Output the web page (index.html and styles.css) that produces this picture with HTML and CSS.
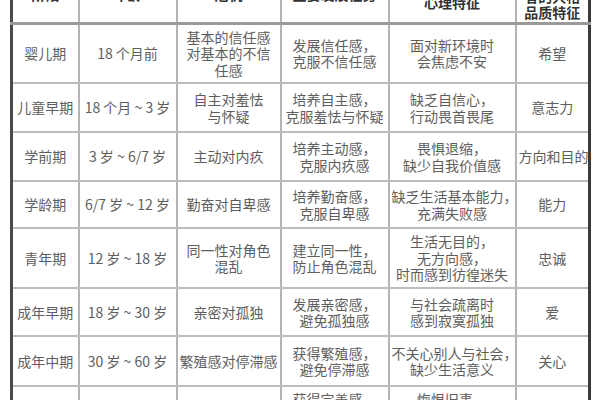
FILE: index.html
```html
<!DOCTYPE html>
<html lang="zh-CN">
<head>
<meta charset="utf-8">
<title>埃里克森人格发展阶段</title>
<link rel="stylesheet" href="styles.css">
</head>
<body>
<div class="page">
<table class="stages">
  <colgroup>
    <col class="c1"><col class="c2"><col class="c3"><col class="c4"><col class="c5"><col class="c6">
  </colgroup>
  <thead>
    <tr class="head">
      <th>阶段</th>
      <th>年龄</th>
      <th>危机</th>
      <th>主要发展任务</th>
      <th>发展障碍者的<br>心理特征</th>
      <th class="tall">发展顺利<br>者的人格<br>品质特征</th>
    </tr>
  </thead>
  <tbody>
    <tr class="h60">
      <td>婴儿期</td>
      <td>18 个月前</td>
      <td>基本的信任感<br>对基本的不信<br>任感</td>
      <td>发展信任感，<br>克服不信任感</td>
      <td>面对新环境时<br>会焦虑不安</td>
      <td>希望</td>
    </tr>
    <tr class="h49">
      <td>儿童早期</td>
      <td>18 个月 ~ 3 岁</td>
      <td>自主对羞怯<br>与怀疑</td>
      <td>培养自主感，<br>克服羞怯与怀疑</td>
      <td>缺乏自信心，<br>行动畏首畏尾</td>
      <td>意志力</td>
    </tr>
    <tr class="h49">
      <td>学前期</td>
      <td>3 岁 ~ 6/7 岁</td>
      <td>主动对内疚</td>
      <td>培养主动感，<br>克服内疚感</td>
      <td>畏惧退缩，<br>缺少自我价值感</td>
      <td>方向和目的</td>
    </tr>
    <tr class="h47">
      <td>学龄期</td>
      <td>6/7 岁 ~ 12 岁</td>
      <td>勤奋对自卑感</td>
      <td>培养勤奋感，<br>克服自卑感</td>
      <td>缺乏生活基本能力，<br>充满失败感</td>
      <td>能力</td>
    </tr>
    <tr class="h60">
      <td>青年期</td>
      <td>12 岁 ~ 18 岁</td>
      <td>同一性对角色<br>混乱</td>
      <td>建立同一性，<br>防止角色混乱</td>
      <td>生活无目的，<br>无方向感，<br>时而感到彷徨迷失</td>
      <td>忠诚</td>
    </tr>
    <tr class="h48">
      <td>成年早期</td>
      <td>18 岁 ~ 30 岁</td>
      <td>亲密对孤独</td>
      <td>发展亲密感，<br>避免孤独感</td>
      <td>与社会疏离时<br>感到寂寞孤独</td>
      <td>爱</td>
    </tr>
    <tr class="h50">
      <td>成年中期</td>
      <td>30 岁 ~ 60 岁</td>
      <td>繁殖感对停滞感</td>
      <td>获得繁殖感，<br>避免停滞感</td>
      <td>不关心别人与社会，<br>缺少生活意义</td>
      <td>关心</td>
    </tr>
    <tr class="h60">
      <td>成熟期</td>
      <td>60 岁以后</td>
      <td>完善对绝望</td>
      <td>获得完善感，<br>避免失望和<br>厌恶感</td>
      <td>悔恨旧事，<br>徒劳无益，<br>感到绝望</td>
      <td>智慧</td>
    </tr>
  </tbody>
</table>
</div>
</body>
</html>
```

FILE: styles.css
```css
html, body {
  margin: 0;
  padding: 0;
  background: #ffffff;
}

.page {
  width: 600px;
  height: 400px;
  overflow: hidden;
  padding-left: 10px;
  box-sizing: border-box;
}

.stages {
  margin-top: -33px;
  width: 578px;
  table-layout: fixed;
  border-collapse: collapse;
  border-left: 3px solid #4a4a4a;
  border-right: 3px solid #3a3a3a;
  font-family: "Noto Sans CJK SC", "Noto Sans", sans-serif;
  font-size: 14px;
  line-height: 16.5px;
  color: #5e5e5e;
}

.c1 { width: 67px; }
.c2 { width: 98px; }
.c3 { width: 104px; }
.c4 { width: 108px; }
.c5 { width: 127px; }
.c6 { width: 74px; }

.stages th,
.stages td {
  text-align: center;
  vertical-align: middle;
  padding: 0 2px;
  border-left: 2px solid #b4b4b4;
  border-right: 2px solid #b4b4b4;
  border-bottom: 2px solid #bdbdbd;
  white-space: nowrap;
}

.stages th {
  font-weight: 700;
  color: #333333;
  border-bottom: 3px solid #9a9a9a;
}

.stages th.tall {
  line-height: 16.5px;
  padding-top: 3px;
}

.head { height: 56px; }
.h60 { height: 60px; }
.h50 { height: 50px; }
.h49 { height: 49px; }
.h48 { height: 48px; }
.h47 { height: 47px; }
```
